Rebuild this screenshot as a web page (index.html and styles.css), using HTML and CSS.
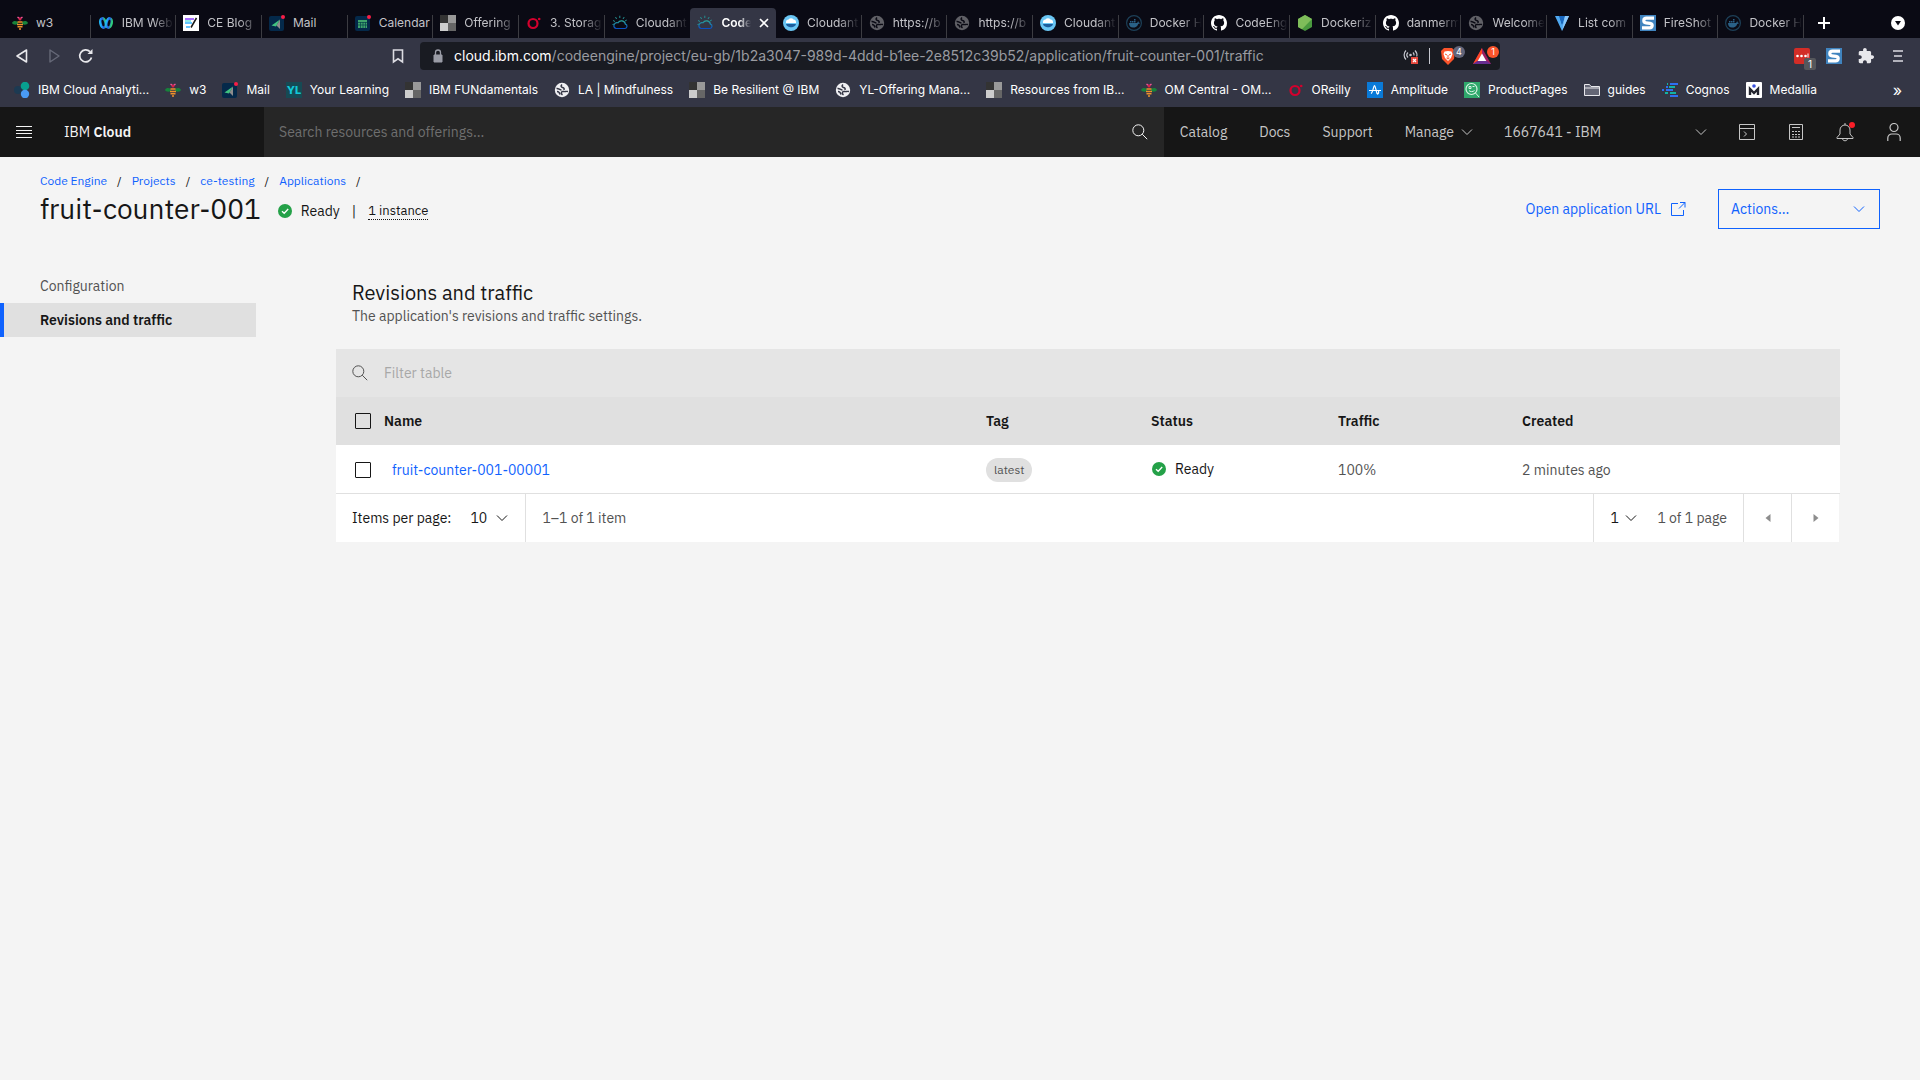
FILE: index.html
```html
<!DOCTYPE html>
<html lang="en">
<head>
<meta charset="utf-8">
<title>fruit-counter-001 - Code Engine - IBM Cloud</title>
<meta name="viewport" content="width=device-width, initial-scale=1">
<link rel="stylesheet" href="styles.css">
</head>
<body>
<svg class="sprite" aria-hidden="true">
  <defs>
    <linearGradient id="grad-cloud" x1="0" y1="0" x2="0" y2="1"><stop offset="0" stop-color="#2aa39a"/><stop offset="1" stop-color="#0b4fc4"/></linearGradient>
    <linearGradient id="grad-webex" x1="0" y1="0" x2="1" y2="0"><stop offset="0" stop-color="#1fb6f5"/><stop offset=".5" stop-color="#2456e8"/><stop offset="1" stop-color="#2fd07a"/></linearGradient>
  </defs>
  <symbol id="i-bee" viewBox="0 0 16 16"><path d="M6 7C4 5.500 1 5.500 0 8c1 2 4 2 6 1zM10 7c2-1.500 5-1.500 6 1-1 2-4 2-6 1z" fill="#17823b"/><path d="M5.500 2.200l1.700 1M10.500 2.200l-1.700 1" stroke="#ee5396" stroke-width="1.500"/><circle cx="8" cy="4" r="1.500" fill="#da1e4a"/><path d="M5.500 7h5M5 9.400h6M5.500 11.800h5M7 13.900h2" stroke="#f0912b" stroke-width="1.500"/></symbol>
  <symbol id="i-webex" viewBox="0 0 16 16"><ellipse cx="5" cy="8" rx="2.600" ry="4.700" fill="none" stroke="url(#grad-webex)" stroke-width="2.600" transform="rotate(-12 5 8)"/><ellipse cx="11" cy="8" rx="2.600" ry="4.700" fill="none" stroke="url(#grad-webex)" stroke-width="2.600" transform="rotate(12 11 8)"/></symbol>
  <symbol id="i-blog" viewBox="0 0 16 16"><path fill="#fff" d="M0 0h16v16H0z"/><path d="M2 4h9" stroke="#8a3ffc" stroke-width="1.500"/><path d="M2 8h7M3 12h4" stroke="#33b1ff" stroke-width="1.500"/><path d="M2 6h6" stroke="#20d5d2"/><path d="M13.500 3L8 12.500" stroke="#161616" stroke-width="1.500"/></symbol>
  <symbol id="i-mail" viewBox="0 0 16 16"><rect y="1" width="15" height="15" rx="2" fill="#04294a"/><path d="M2.500 10.500L11 4.500l-4 7z" fill="#3fc380"/><path d="M11 4.500v9.500l-3.500-3.500z" fill="#8d8d8d"/><circle cx="14" cy="2" r="2" fill="#fa1e46"/></symbol>
  <symbol id="i-calendar" viewBox="0 0 16 16"><rect y="1" width="15" height="15" rx="2" fill="#04294a"/><path d="M3 5h9v8H3z" fill="#3fa36c"/><path d="M3 7.500h9M3 10h9M5.500 7v6M8 7v6M10.500 7v6" stroke="#04404a" stroke-width=".7"/><circle cx="14" cy="2" r="2" fill="#fa1e46"/></symbol>
  <symbol id="i-blocks" viewBox="0 0 16 16"><path d="M0 0h8v8H0z" fill="#333"/><path d="M8 0h8v8H8z" fill="#999"/><path d="M0 8h8v8H0z" fill="#ccc"/><path d="M8 8h8v8H8z" fill="#666"/></symbol>
  <symbol id="i-oreilly" viewBox="0 0 16 16"><circle cx="7" cy="8.500" r="4.500" fill="none" stroke="#d3002d" stroke-width="2.200"/><circle cx="13.200" cy="4" r="1.300" fill="#d3002d"/></symbol>
  <symbol id="i-cloud" viewBox="0 0 16 16"><path d="M4 13.500h9a2.200 2.200 0 0 0 .4-4.300A4 4 0 0 0 6 7.800 3 3 0 0 0 4 13.500z" fill="none" stroke="url(#grad-cloud)" stroke-width="1.200"/><path d="M3 6.500L1 5.500M4.600 4L3.500 2M7.800 3V.7M11 4l1.200-2M2.500 9L.5 9.500M13 6l1.800-1" stroke="#248f92"/></symbol>
  <symbol id="i-cloudant" viewBox="0 0 16 16"><circle cx="8" cy="8" r="8" fill="#6ac6f4"/><path d="M3 7a2.500 2.500 0 0 1 2.500-2.500 3 3 0 0 1 5 0A2.500 2.500 0 0 1 13 7v1H3z" fill="#fff"/><path d="M3 9h10a3 3 0 0 1-2 2.500c-1 1-4.500 1-6 0A3 3 0 0 1 3 9z" fill="#1c5d9c"/></symbol>
  <symbol id="i-globe" viewBox="0 0 16 16"><circle cx="8" cy="8" r="7.200" fill="currentColor"/><path d="M2.500 6.500c2-.5 3 1.500 5 1.500M8 2.500C6.500 4 7 5 8.500 5.500S11 7 9.500 8M14 9.500c-2-.5-3 .5-5 0s-2 2.500-.5 3.500M3 9.500c1 0 2.500.5 3 3" fill="none" stroke="var(--globe-line)" stroke-width="1.500"/></symbol>
  <symbol id="i-docker" viewBox="0 0 16 16"><circle cx="8" cy="8" r="7.400" fill="none" stroke="#1d4058" stroke-width="1.200"/><path d="M3 8h8.200c.1-.8.600-1.400 1-1.700.5.400.7.900.6 1.400.4 0 .8 0 1.100.3-.4.700-1 .9-1.700.9C11.300 11.500 9.500 12.500 7 12.500 4.500 12.500 3 11 3 8zM4 6h1.500v1.500H4zM6 6h1.500v1.500H6zM8 6h1.500v1.500H8zM8 4h1.500v1.500H8z" fill="#2a6187"/></symbol>
  <symbol id="i-github" viewBox="0 0 16 16"><path fill="#fff" d="M8 0C3.580 0 0 3.580 0 8c0 3.540 2.290 6.530 5.470 7.590.4.070.55-.17.55-.38 0-.19-.01-.82-.01-1.490-2.010.37-2.530-.49-2.690-.94-.09-.23-.48-.94-.82-1.130-.28-.15-.68-.52-.01-.53.63-.01 1.080.58 1.230.82.72 1.210 1.870.87 2.330.66.07-.52.28-.87.51-1.070-1.780-.2-3.640-.89-3.640-3.950 0-.87.31-1.590.82-2.150-.08-.2-.36-1.020.08-2.120 0 0 .67-.21 2.200.82.64-.18 1.320-.27 2-.27s1.360.09 2 .27c1.530-1.040 2.200-.82 2.200-.82.44 1.100.16 1.920.08 2.120.51.56.82 1.270.82 2.150 0 3.070-1.870 3.750-3.650 3.950.29.25.54.73.54 1.480 0 1.070-.01 1.930-.01 2.200 0 .21.15.46.55.38A8.010 8.010 0 0 0 16 8c0-4.420-3.580-8-8-8z"/></symbol>
  <symbol id="i-node" viewBox="0 0 16 16"><path d="M8 0l7 4v8l-7 4-7-4V4z" fill="#4a9a3f"/><path d="M8 0l7 4L5 14.300 1 12V4z" fill="#7fbd5a"/></symbol>
  <symbol id="i-vue" viewBox="0 0 16 16"><path d="M1 1h4.500L8 9l2.500-8H15L8 16z" fill="#4fa8f0"/><path d="M5 1h6L8 10z" fill="#1867c0"/><path d="M11 1h4L8 16z" fill="#8cc8fa"/></symbol>
  <symbol id="i-fireshot" viewBox="0 0 16 16"><path d="M0 0h16v16H0z" fill="#4084bf"/><path d="M14 3.200H6.500C3 3.200 3 7.500 6 7.800l4 .5c3 .4 3 4.500-.5 4.500H2" fill="none" stroke="#fff" stroke-width="3.200"/></symbol>
  <symbol id="i-analytics" viewBox="0 0 16 16"><circle cx="4" cy="8" r="4" fill="#1c3a52"/><circle cx="11" cy="4" r="4.300" fill="#08a08f"/><circle cx="11" cy="12" r="4.200" fill="#4a9bf5"/></symbol>
  <symbol id="i-yl" viewBox="0 0 16 16"><path d="M0 0h16v16H0z" fill="#164a54"/><text x="8" y="12" font-family="Inter, sans-serif" font-size="11" font-weight="800" fill="#12c8d8" text-anchor="middle">YL</text></symbol>
  <symbol id="i-amplitude" viewBox="0 0 16 16"><path d="M0 0h16v16H0z" fill="#0a7ad8"/><path d="M2 8.500h12M4 11.500c2-1 2.500-8 3.500-8s2 9 3.200 8.500 1-2.500.8-3.500" fill="none" stroke="#fff" stroke-width="1.200"/></symbol>
  <symbol id="i-product" viewBox="0 0 16 16"><path d="M0 0h16v16H0z" fill="#2fa86c"/><circle cx="7.500" cy="7" r="5.500" fill="none" stroke="#d8f5e5" stroke-width="1.200"/><path d="M11.500 11l3.500 4M5 4.500h2v2H5zM8.500 4.500h2M5 8.500c1 1.500 4 1.500 5.500 0" stroke="#d8f5e5" fill="none"/></symbol>
  <symbol id="i-folder" viewBox="0 0 16 16"><path d="M.5 13.500v-11h5l1.500 2h8.500v9z" fill="#646675" stroke="#e8e8ec"/><path d="M1 6h14" stroke="#e8e8ec"/></symbol>
  <symbol id="i-cognos" viewBox="0 0 16 16"><path d="M8 2h8M4 5h2M0 8h2M4 8h7M8 14h8" stroke="#2e6ff2" stroke-width="2"/><path d="M7 5h6M8 11h6M5 2h1M3 11h3" stroke="#12b3a3" stroke-width="2"/></symbol>
  <symbol id="i-medallia" viewBox="0 0 16 16"><rect width="16" height="16" rx="1" fill="#fff"/><path d="M4 13V7l4 4 4-4v6" fill="none" stroke="#23252f" stroke-width="2.400"/><circle cx="8" cy="4" r="1.800" fill="#3a52e0"/></symbol>
  <symbol id="i-chevron" viewBox="0 0 16 16"><path d="M3 5.500L8 10.500l5-5" fill="none" stroke="currentColor"/></symbol>
  <symbol id="i-search" viewBox="0 0 16 16"><circle cx="6.300" cy="6.300" r="5.500" fill="none" stroke="currentColor"/><path d="M10.200 10.200l5 5" stroke="currentColor"/></symbol>
  <symbol id="i-ok" viewBox="0 0 14 14"><circle cx="7" cy="7" r="7" fill="#24a148"/><path d="M4 7.200l2.200 2.100L10.200 5" fill="none" stroke="#fff" stroke-width="1.300"/></symbol>
</svg>

<header class="browser">
  <div class="tabstrip">
    <div class="tabs" role="tablist">
      <button class="tab" role="tab"><svg class="icon"><use href="#i-bee"/></svg><span class="tab-title">w3</span></button>
      <button class="tab" role="tab"><svg class="icon"><use href="#i-webex"/></svg><span class="tab-title fade">IBM Web</span></button>
      <button class="tab" role="tab"><svg class="icon"><use href="#i-blog"/></svg><span class="tab-title fade">CE Blog</span></button>
      <button class="tab" role="tab"><svg class="icon"><use href="#i-mail"/></svg><span class="tab-title">Mail</span></button>
      <button class="tab" role="tab"><svg class="icon"><use href="#i-calendar"/></svg><span class="tab-title">Calendar</span></button>
      <button class="tab" role="tab"><svg class="icon"><use href="#i-blocks"/></svg><span class="tab-title fade">Offering</span></button>
      <button class="tab" role="tab"><svg class="icon"><use href="#i-oreilly"/></svg><span class="tab-title fade">3. Storag</span></button>
      <button class="tab tab-plain" role="tab"><svg class="icon"><use href="#i-cloud"/></svg><span class="tab-title fade">Cloudant</span></button>
      <button class="tab tab-active" role="tab" aria-selected="true"><svg class="icon"><use href="#i-cloud"/></svg><span class="tab-title fade">Code</span><svg class="tab-close" viewBox="0 0 10 10"><path d="M1 1l8 8M9 1L1 9" stroke="#fff" stroke-width="1.600"/></svg></button>
      <button class="tab" role="tab"><svg class="icon"><use href="#i-cloudant"/></svg><span class="tab-title fade">Cloudant</span></button>
      <button class="tab" role="tab"><svg class="icon globe-dim"><use href="#i-globe"/></svg><span class="tab-title fade">https://b</span></button>
      <button class="tab" role="tab"><svg class="icon globe-dim"><use href="#i-globe"/></svg><span class="tab-title fade">https://b</span></button>
      <button class="tab" role="tab"><svg class="icon"><use href="#i-cloudant"/></svg><span class="tab-title fade">Cloudant</span></button>
      <button class="tab" role="tab"><svg class="icon"><use href="#i-docker"/></svg><span class="tab-title fade">Docker H</span></button>
      <button class="tab" role="tab"><svg class="icon"><use href="#i-github"/></svg><span class="tab-title fade">CodeEng</span></button>
      <button class="tab" role="tab"><svg class="icon"><use href="#i-node"/></svg><span class="tab-title fade">Dockeriz</span></button>
      <button class="tab" role="tab"><svg class="icon"><use href="#i-github"/></svg><span class="tab-title fade">danmerm</span></button>
      <button class="tab" role="tab"><svg class="icon globe-dim"><use href="#i-globe"/></svg><span class="tab-title fade">Welcome</span></button>
      <button class="tab" role="tab"><svg class="icon"><use href="#i-vue"/></svg><span class="tab-title fade">List com</span></button>
      <button class="tab" role="tab"><svg class="icon"><use href="#i-fireshot"/></svg><span class="tab-title fade">FireShot</span></button>
      <button class="tab" role="tab"><svg class="icon"><use href="#i-docker"/></svg><span class="tab-title fade">Docker H</span></button>
    </div>
    <button class="strip-button" aria-label="New tab"><svg width="12" height="12" viewBox="0 0 12 12"><path d="M6 0v12M0 6h12" stroke="#fff" stroke-width="2"/></svg></button>
    <button class="strip-button strip-end" aria-label="Search tabs"><svg width="14" height="14" viewBox="0 0 14 14"><circle cx="7" cy="7" r="7" fill="#fff"/><path d="M4 5h6L7 9.500z" fill="#0a0a14"/></svg></button>
  </div>

  <div class="toolbar">
    <div class="nav-buttons">
      <button aria-label="Back"><svg width="16" height="16" viewBox="0 0 16 16"><path d="M12.500 2v12L3 8z" fill="none" stroke="#e8e8ec" stroke-width="1.600" stroke-linejoin="round"/></svg></button>
      <button aria-label="Forward"><svg width="16" height="16" viewBox="0 0 16 16"><path d="M4 2v12l9-6z" fill="none" stroke="#666978" stroke-width="1.400" stroke-linejoin="round"/></svg></button>
      <button aria-label="Reload"><svg width="16" height="16" viewBox="0 0 16 16"><path d="M13.500 9.500A6 6 0 1 1 12 3.700" fill="none" stroke="#e8e8ec" stroke-width="1.700"/><path d="M14.500 1v5h-5z" fill="#e8e8ec"/></svg></button>
    </div>
    <button class="save" aria-label="Bookmark"><svg width="12" height="16" viewBox="0 0 12 16"><path d="M1.500 2h9v12L6 10.800 1.500 14z" fill="none" stroke="#dcdce2" stroke-width="1.600"/></svg></button>
    <div class="address">
      <svg width="10" height="14" viewBox="0 0 10 14"><path d="M1 6h8v7H1z" fill="#9a9ca6" stroke="#9a9ca6" stroke-linejoin="round"/><path d="M2.500 6V3.500a2.500 2.500 0 0 1 5 0V6" fill="none" stroke="#9a9ca6" stroke-width="1.300"/></svg>
      <span class="url"><span class="url-host">cloud.ibm.com</span>/codeengine/project/eu-gb/1b2a3047-989d-4ddd-b1ee-2e8512c39b52/application/fruit-counter-001/traffic</span>
      <svg width="16" height="16" viewBox="0 0 16 16"><path d="M3 2.500C.5 5 .5 9 3 11.500M5 4.500c-1.500 1.500-1.500 3.500 0 5M12 2.500c2 2 2.200 4 1.800 6M10 4.500c1 1 1.200 2 1 3" fill="none" stroke="#c6c8d0" stroke-width="1.200"/><circle cx="7.500" cy="7" r="1.300" fill="#c6c8d0"/><path d="M8 9h7v7H8z" fill="#e5483d"/><path d="M10 11l3 3M13 11l-3 3" stroke="#fff" stroke-width="1.200"/></svg>
      <span class="address-rule"></span>
      <button class="shield" aria-label="Shields"><svg width="16" height="18" viewBox="0 0 16 18"><path d="M4 1h8l3 3-1 8-6 6-6-6L1 4z" fill="#fb542b"/><path d="M4.500 4.500L8 4l3.500.5 1 2.500-1.500 4-3 3-3-3L3.500 7z" fill="#fff"/><path d="M5 7l2 1M11 7L9 8M8 8v3M6.500 11L8 12l1.500-1" stroke="#fb542b" fill="none"/></svg><span class="count count-gray">4</span></button>
      <button class="shield" aria-label="Rewards"><svg width="18" height="16" viewBox="0 0 18 16"><path d="M9 0l9 16H0z" fill="#9e1f63"/><path d="M9 0v5.500L4.500 13 0 16z" fill="#ff4724"/><path d="M0 16l4.500-3h9l4.500 3z" fill="#662d91"/><path d="M9 5.500l4.300 7.500H4.700z" fill="#fff"/></svg><span class="count count-orange">1</span></button>
    </div>
    <div class="extensions">
      <button class="ext" aria-label="Password manager"><svg class="icon" viewBox="0 0 16 16"><rect width="16" height="16" rx="2" fill="#d32d27"/><circle cx="3.500" cy="8" r="1.300" fill="#fff"/><circle cx="7.500" cy="8" r="1.300" fill="#fff"/><circle cx="11.500" cy="8" r="1.300" fill="#fff"/><path d="M14 5.500v4" stroke="#fff"/></svg><span class="ext-count">1</span></button>
      <button class="ext" aria-label="FireShot"><svg class="icon"><use href="#i-fireshot"/></svg></button>
      <button class="ext" aria-label="Extensions"><svg class="icon" viewBox="1 1 22 22"><path fill="#e8e8ec" d="M20.500 11H19V7c0-1.100-.9-2-2-2h-4V3.500C13 2.120 11.880 1 10.500 1S8 2.120 8 3.500V5H4c-1.100 0-1.990.9-1.990 2v3.800H3.500c1.490 0 2.700 1.210 2.700 2.700s-1.210 2.700-2.700 2.700H2V20c0 1.100.9 2 2 2h3.800v-1.500c0-1.490 1.210-2.700 2.700-2.700 1.490 0 2.700 1.210 2.700 2.700V22H17c1.100 0 2-.9 2-2v-4h1.500c1.380 0 2.500-1.120 2.500-2.500S21.880 11 20.500 11z"/></svg></button>
      <button class="ext" aria-label="Menu"><svg class="icon" viewBox="0 0 16 16"><path d="M3 3h10M4 8h8M3 13h10" stroke="#dcdce2" stroke-width="1.600"/></svg></button>
    </div>
  </div>

  <nav class="bookmarks" aria-label="Bookmarks">
    <a href="#"><svg class="icon"><use href="#i-analytics"/></svg>IBM Cloud Analyti...</a>
    <a href="#"><svg class="icon"><use href="#i-bee"/></svg>w3</a>
    <a href="#"><svg class="icon"><use href="#i-mail"/></svg>Mail</a>
    <a href="#"><svg class="icon"><use href="#i-yl"/></svg>Your Learning</a>
    <a href="#"><svg class="icon"><use href="#i-blocks"/></svg>IBM FUNdamentals</a>
    <a href="#"><svg class="icon globe"><use href="#i-globe"/></svg>LA | Mindfulness</a>
    <a href="#"><svg class="icon"><use href="#i-blocks"/></svg>Be Resilient @ IBM</a>
    <a href="#"><svg class="icon globe"><use href="#i-globe"/></svg>YL-Offering Mana...</a>
    <a href="#"><svg class="icon"><use href="#i-blocks"/></svg>Resources from IB...</a>
    <a href="#"><svg class="icon"><use href="#i-bee"/></svg>OM Central - OM...</a>
    <a href="#"><svg class="icon"><use href="#i-oreilly"/></svg>OReilly</a>
    <a href="#"><svg class="icon"><use href="#i-amplitude"/></svg>Amplitude</a>
    <a href="#"><svg class="icon"><use href="#i-product"/></svg>ProductPages</a>
    <a href="#"><svg class="icon"><use href="#i-folder"/></svg>guides</a>
    <a href="#"><svg class="icon"><use href="#i-cognos"/></svg>Cognos</a>
    <a href="#"><svg class="icon"><use href="#i-medallia"/></svg>Medallia</a>
    <button class="more" aria-label="More bookmarks">»</button>
  </nav>
</header>

<header class="masthead">
  <div class="brand">
    <button aria-label="Menu"><svg width="16" height="12" viewBox="0 0 16 12"><path d="M0 .5h16M0 4.500h16M0 7.500h16M0 11.500h16" stroke="#f4f4f4"/></svg></button>
    <a href="#">IBM <b>Cloud</b></a>
  </div>
  <div class="global-search">
    <input type="text" aria-label="Search resources and offerings" placeholder="Search resources and offerings...">
    <svg class="icon"><use href="#i-search"/></svg>
  </div>
  <nav class="links">
    <a href="#">Catalog</a>
    <a href="#">Docs</a>
    <a href="#">Support</a>
    <button>Manage<svg class="icon"><use href="#i-chevron"/></svg></button>
  </nav>
  <div class="dropdown account">
    <select aria-label="Account"><option>1667641 - IBM</option></select>
    <svg class="icon"><use href="#i-chevron"/></svg>
  </div>
  <div class="actions-bar">
    <button aria-label="Cloud Shell"><svg class="icon" viewBox="0 0 16 16"><path d="M.5.5h15v15H.5zM.5 4.500h15M5 7.500L7.500 10 5 12.500" fill="none" stroke="currentColor"/></svg></button>
    <button aria-label="Cost estimator"><svg class="icon" viewBox="0 0 16 16"><path d="M1.500.5h13v15h-13zM4 3.500h8" fill="none" stroke="currentColor"/><path d="M4 7.500h8M4 10.500h8M4 13h8" stroke="currentColor" stroke-dasharray="2 1"/></svg></button>
    <button class="bell" aria-label="Notifications"><svg width="20" height="20" viewBox="0 0 20 20"><path d="M10 1v2M10 3a5 5 0 0 0-5 5v4l-3 3.500v1h16v-1L15 12V8a5 5 0 0 0-5-5zM7.500 16.500c0 3 5 3 5 0" fill="none" stroke="currentColor"/><circle cx="17" cy="3" r="3" fill="#fa1e28"/></svg></button>
    <button aria-label="Profile"><svg width="14" height="18" viewBox="0 0 14 18"><circle cx="7" cy="4.500" r="4" fill="none" stroke="currentColor" stroke-width="1.200"/><path d="M.8 18v-3a4 4 0 0 1 4-4h4.400a4 4 0 0 1 4 4v3" fill="none" stroke="currentColor" stroke-width="1.200"/></svg></button>
  </div>
</header>

<section class="page-head">
  <div class="page-title">
    <nav class="crumbs" aria-label="Breadcrumb">
      <a href="#">Code Engine</a><span>/</span><a href="#">Projects</a><span>/</span><a href="#">ce-testing</a><span>/</span><a href="#">Applications</a><span>/</span>
    </nav>
    <div class="title-row">
      <h1>fruit-counter-001</h1>
      <div class="title-meta">
        <span class="status"><svg class="ok"><use href="#i-ok"/></svg>Ready</span>
        <span>|</span>
        <span class="instances">1 instance</span>
      </div>
    </div>
  </div>
  <a class="launch" href="#">Open application URL<svg class="icon" viewBox="0 0 16 16"><path d="M8 2.500H1.500v12h12V9M10 1.500h5v5M15 1.500L9 7.500" fill="none" stroke="currentColor"/></svg></a>
  <div class="dropdown actions">
    <select aria-label="Actions"><option>Actions...</option></select>
    <svg class="icon"><use href="#i-chevron"/></svg>
  </div>
</section>

<div class="body">
  <nav class="side">
    <a href="#">Configuration</a>
    <a href="#" class="current" aria-current="page">Revisions and traffic</a>
  </nav>
  <main>
    <h2>Revisions and traffic</h2>
    <p class="lead">The application's revisions and traffic settings.</p>
    <div class="filter">
      <svg class="icon"><use href="#i-search"/></svg>
      <input type="text" aria-label="Filter table" placeholder="Filter table">
    </div>
    <table>
      <colgroup><col class="c-check"><col><col class="c-tag"><col class="c-status"><col class="c-traffic"><col class="c-created"></colgroup>
      <thead>
        <tr><th class="check"><input type="checkbox" aria-label="Select all"></th><th>Name</th><th>Tag</th><th>Status</th><th>Traffic</th><th>Created</th></tr>
      </thead>
      <tbody>
        <tr><td class="check"><input type="checkbox" aria-label="Select fruit-counter-001-00001"></td><td><a class="revision" href="#">fruit-counter-001-00001</a></td><td><span class="tag">latest</span></td><td class="state"><span class="status"><svg class="ok"><use href="#i-ok"/></svg>Ready</span></td><td>100%</td><td>2 minutes ago</td></tr>
      </tbody>
    </table>
    <div class="pager">
      <label for="page-size">Items per page:</label>
      <div class="dropdown size"><select id="page-size"><option>10</option></select><svg class="icon"><use href="#i-chevron"/></svg></div>
      <span class="range">1–1 of 1 item</span>
      <div class="dropdown page"><select aria-label="Page number"><option>1</option></select><svg class="icon"><use href="#i-chevron"/></svg></div>
      <span class="total">1 of 1 page</span>
      <button aria-label="Previous page" disabled><svg width="6" height="8" viewBox="0 0 6 8"><path d="M5.500 0v8L.5 4z" fill="currentColor"/></svg></button>
      <button aria-label="Next page" disabled><svg width="6" height="8" viewBox="0 0 6 8"><path d="M.5 0v8l5-4z" fill="currentColor"/></svg></button>
    </div>
  </main>
</div>
</body>
</html>
```

FILE: styles.css
```css
* { box-sizing: border-box; }

body {
  margin: 0;
  min-height: 100vh;
  background: #f4f4f4;
  color: #161616;
  font: 14px/18px "IBM Plex Sans", Roboto, sans-serif;
}

a { color: inherit; text-decoration: none; }

button, input, select {
  margin: 0;
  padding: 0;
  border: 0;
  border-radius: 0;
  background: none;
  color: inherit;
  font: inherit;
}

button { display: flex; align-items: center; }
svg { flex: none; display: block; }
.sprite { position: absolute; width: 0; height: 0; }
.icon { width: 16px; height: 16px; }

/* Browser window */
.browser {
  background: #343645;
  color: #fff;
  font: 12px/16px Inter, sans-serif;
}

.tabstrip {
  display: flex;
  align-items: flex-end;
  height: 38px;
  padding-left: 5px;
  background: #0a0a14;
}

.tabs { display: flex; flex: 1; align-items: flex-end; min-width: 0; }

.tab {
  flex: 1 1 86px;
  min-width: 0;
  height: 23px;
  padding: 0 1px 7px 7px;
  gap: 8px;
  border-right: 1px solid #3c3c42;
  color: #c3c3c8;
}

.tab-plain { border-right-color: transparent; }

.tab-title {
  flex: 1;
  min-width: 0;
  overflow: hidden;
  white-space: nowrap;
  text-align: left;
}

.fade { mask-image: linear-gradient(to right, #000 60%, transparent); }

.tab-active {
  height: 30px;
  padding-top: 7px;
  padding-right: 5px;
  border: 0;
  border-radius: 4px 4px 0 0;
  background: #343645;
  color: #fff;
  font-weight: 600;
}

.tab-close { width: 10px; height: 10px; margin-right: 2px; }
.globe-dim { color: #606066; --globe-line: #0a0a14; }
.globe { color: #f0f0f3; --globe-line: #343645; }

.strip-button { height: 30px; padding: 0 14px; }
.strip-end { margin-left: 33px; padding-right: 15px; }

.toolbar { display: flex; align-items: center; height: 36px; padding: 0 14px; }
.nav-buttons { display: flex; gap: 16px; }
.save { margin: 0 16px 0 auto; }

.address {
  display: flex;
  align-items: center;
  flex: 0 1 1080px;
  min-width: 0;
  height: 28px;
  padding: 0 1px 0 13px;
  gap: 10px;
  border-radius: 4px;
  background: #191b22;
}

.url { flex: 1; min-width: 0; overflow: hidden; white-space: nowrap; font-size: 14px; padding-left: 1px; color: #9a9ba1; }
.url-host { color: #fff; }
.address-rule { width: 1px; height: 16px; background: #c6c8d0; }
.shield { position: relative; width: 25px; height: 24px; }
.shield + .shield { width: 26px; margin-left: -2px; }

.count {
  position: absolute;
  top: 2px;
  right: 0;
  width: 12px;
  border-radius: 6px;
  font-size: 9px;
  line-height: 12px;
  text-align: center;
  color: #fff;
}
.count-gray { background: #62657a; }
.count-orange { background: #fb542b; }

.extensions { display: flex; flex: 0 0 auto; gap: 16px; margin-left: 294px; }
.ext { position: relative; }

.ext-count {
  position: absolute;
  top: 10px;
  left: 10px;
  width: 12px;
  border-radius: 2px;
  background: #55575c;
  font-size: 10px;
  line-height: 12px;
  text-align: center;
}

.bookmarks {
  display: flex;
  align-items: center;
  gap: 16px;
  height: 33px;
  padding: 0 18px 2px 14px;
  white-space: nowrap;
}
.bookmarks a { display: flex; align-items: center; gap: 8px; }
.more { margin-left: auto; font-size: 16px; }

/* IBM Cloud header */
.masthead { display: flex; height: 50px; background: #161616; color: #c6c6c6; }
.brand { display: flex; align-items: center; gap: 32px; width: 264px; padding-left: 16px; color: #f4f4f4; }
.brand b { font-weight: 600; }

.global-search { display: flex; align-items: center; flex: 1; padding: 0 16px 0 15px; background: #262626; color: #f4f4f4; }
.global-search input { flex: 1; height: 100%; outline: 0; }
.global-search input::placeholder { color: #6f6f6f; opacity: 1; }

.links { display: flex; align-items: center; gap: 32px; padding-left: 16px; }
.links button { gap: 5px; }

.dropdown { display: grid; align-items: center; }
.dropdown select { grid-area: 1 / 1; width: 100%; height: 100%; appearance: none; outline: 0; }
.dropdown svg { grid-area: 1 / 1; justify-self: end; pointer-events: none; }
.account { width: 205px; margin-left: 29px; }

.actions-bar { display: flex; align-items: center; padding: 0 2px 0 13px; }
.actions-bar button { justify-content: center; width: 49px; height: 50px; }

/* Page heading */
.page-head { display: flex; align-items: flex-start; padding: 15px 40px 0; }
.page-title { flex: 1; }
.crumbs { display: flex; font-size: 12px; color: #161616; }
.crumbs a { color: #0f62fe; }
.crumbs span { padding: 0 10px; }

.title-row { display: flex; align-items: center; gap: 17px; }
h1 { margin: 0; font-size: 28px; line-height: 38px; font-weight: 400; }
.title-meta { display: flex; align-items: center; gap: 12px; padding-top: 3px; }
.status { display: flex; align-items: center; gap: 9px; color: #161616; }
.ok { width: 14px; height: 14px; }
.instances { border-bottom: 1px dotted #161616; font-size: 13px; line-height: 17px; }

.launch { display: flex; align-items: center; gap: 9px; height: 40px; margin: 17px 32px 0 0; color: #0f62fe; }
.actions { width: 162px; height: 40px; margin-top: 17px; border: 1px solid #0f62fe; color: #0f62fe; }
.actions select { padding-left: 12px; }
.actions svg { margin-right: 12px; }

/* Body */
.body { display: flex; align-items: flex-start; padding: 40px 80px 40px 0; }
.side { flex: none; width: 256px; margin-right: 80px; color: #525252; }
.side a { display: block; padding: 8px 36px; border-left: 4px solid transparent; }
.side .current { border-color: #0f62fe; background: #e0e0e0; color: #161616; font-weight: 600; }

main { flex: 1; min-width: 0; padding-top: 12px; }
h2 { margin: 0 16px; font-size: 20px; line-height: 24px; font-weight: 400; }
.lead { margin: 2px 16px 24px; color: #525252; }

.filter { display: flex; align-items: center; gap: 16px; height: 48px; padding: 0 16px; background: #e5e5e5; color: #525252; }
.filter input { flex: 1; height: 100%; outline: 0; }
.filter input::placeholder { color: #a8a8a8; opacity: 1; }

table { width: 100%; border-collapse: separate; border-spacing: 0; table-layout: fixed; }
.c-check { width: 48px; }
.c-tag { width: 165px; }
.c-status { width: 187px; }
.c-traffic { width: 184px; }
.c-created { width: 318px; }
th, td { height: 48px; padding: 0; text-align: left; vertical-align: middle; }
th { background: #e0e0e0; font-weight: 600; }
td { height: 49px; padding-top: 2px; background: #fff; border-bottom: 1px solid #e0e0e0; color: #525252; }
.check { padding-left: 19px; }
.state { padding: 0 0 1px 1px; }
.check input { display: block; width: 16px; height: 16px; appearance: none; border: 1px solid #161616; border-radius: 1px; }
.revision { margin-left: 8px; color: #0f62fe; }
.tag { display: inline-block; padding: 0 8px; border-radius: 12px; background: #e0e0e0; font-size: 12px; line-height: 24px; }

.pager { display: flex; align-items: center; height: 48px; margin-right: 1px; padding-left: 16px; background: #fff; }
.size { width: 56px; height: 48px; margin-left: 19px; padding-right: 15px; border-right: 1px solid #e0e0e0; }
.range { flex: 1; padding-left: 16px; color: #525252; }
.page { width: 46px; height: 48px; padding-left: 16px; border-left: 1px solid #e0e0e0; }
.total { padding: 0 16px 0 18px; color: #525252; }
.pager button { justify-content: center; width: 48px; height: 48px; border-left: 1px solid #e0e0e0; color: #8d8d8d; }
```
